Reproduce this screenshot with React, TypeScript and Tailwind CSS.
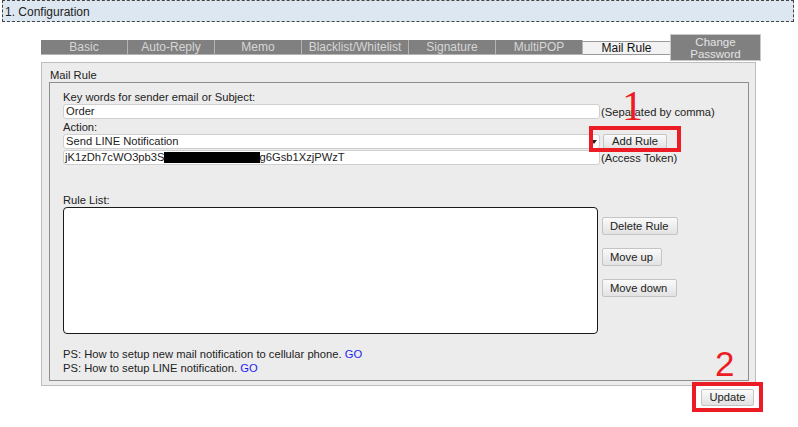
import React from 'react';

const tabs = [
  { label: 'Basic', w: 'w-[87px]' },
  { label: 'Auto-Reply', w: 'w-[87px]' },
  { label: 'Memo', w: 'w-[87px]' },
  { label: 'Blacklist/Whitelist', w: 'w-[107px]' },
  { label: 'Signature', w: 'w-[87px]' },
  { label: 'MultiPOP', w: 'w-[87px]' },
];

const btn =
  'h-[18px] px-[7px] border border-[#c4c4c4] rounded-[2px] bg-gradient-to-b from-[#fafafa] to-[#e2e2e2] text-[#222] leading-[16px] text-left';

export default function App() {
  return (
    <div className="relative w-[798px] h-[427px] bg-white font-['Liberation_Sans',Arial,sans-serif] text-[11.2px] leading-[14px] text-[#222]">
      {/* Section header */}
      <div className="ml-[2px] w-[792px] h-[22px] border border-dashed border-[#444] bg-[#dde7f2] pl-[2px] pt-[1px] flex items-center text-[12px]">
        1. Configuration
      </div>

      {/* Tabs */}
      <div className="ml-[41px] mt-[12px] h-[27px] flex items-center">
        {tabs.map((t) => (
          <div
            key={t.label}
            className={`${t.w} h-[15px] bg-[#808080] text-[#d6d6d6] border-r border-b border-[#b4b4b4] flex items-center justify-center text-[12px]`}
          >
            {t.label}
          </div>
        ))}
        <div className="w-[87px] h-[14px] bg-[#f2f2f2] border-t border-b border-[#9a9a9a] flex items-center justify-center text-[12px] text-[#111]">
          Mail Rule
        </div>
        <div className="w-[91px] h-[27px] bg-[#808080] border border-[#c8c8c8] text-[#e4e4e4] flex flex-col items-center justify-center text-[11.5px] leading-[12px]">
          <span>Change</span>
          <span>Password</span>
        </div>
      </div>

      {/* Panel */}
      <div className="ml-[41px] mt-[1px] w-[715px] h-[324px] border border-[#bdbdbd] bg-[#ececec] px-[7px] pt-[5px]">
        <div className="pl-[1px]">Mail Rule</div>
        <div className="w-[700px] h-[299px] border border-[#8e8e8e] pl-[13px] pt-[7px]">
          <div>Key words for sender email or Subject:</div>
          <div className="flex items-center h-[15px]">
            <div className="w-[537px] h-[15px] bg-white border border-[#cfcfcf] rounded-[3px] pl-[2px] leading-[13px]">
              Order
            </div>
            <span className="ml-[1px]">(Separated by comma)</span>
          </div>
          <div className="mt-[1px]">Action:</div>
          <div className="flex items-center h-[15px]">
            <div className="w-[537px] h-[15px] bg-white border border-[#cfcfcf] rounded-[3px] pl-[2px] leading-[13px] flex items-center justify-between pr-[2px]">
              <span>Send LINE Notification</span>
              <svg width="6" height="4" viewBox="0 0 6 4">
                <path d="M0 0 L6 0 L3 4 Z" fill="#222" />
              </svg>
            </div>
            <button className="ml-[3px] w-[64px] h-[15px] border border-[#c4c4c4] rounded-[2px] bg-gradient-to-b from-[#fafafa] to-[#e2e2e2] leading-[13px] text-center">
              Add Rule
            </button>
          </div>
          <div className="flex items-center h-[15px] mt-[1px]">
            <div className="w-[537px] h-[15px] bg-white border border-[#cfcfcf] rounded-[3px] pl-[1px] leading-[13px] flex items-center whitespace-nowrap">
              <span>jK1zDh7cWO3pb3S</span>
              <span className="inline-block w-[96px] h-[11px] bg-black -ml-[1px]" />
              <span>g6Gsb1XzjPWzT</span>
            </div>
            <span className="ml-[1px]">(Access Token)</span>
          </div>

          <div className="mt-[28px]">Rule List:</div>
          <div className="flex">
            <div className="w-[535px] h-[127px] bg-white border border-[#1a1a1a] rounded-[4px]" />
            <div className="ml-[4px] pt-[10px] flex flex-col items-start gap-[13px]">
              <button className={`${btn} w-[76px]`}>Delete Rule</button>
              <button className={`${btn} w-[60px]`}>Move up</button>
              <button className={`${btn} w-[75px]`}>Move down</button>
            </div>
          </div>

          <div className="mt-[13px]">
            PS: How to setup new mail notification to cellular phone.{' '}
            <span className="text-[#1c1cf0]">GO</span>
          </div>
          <div>
            PS: How to setup LINE notification. <span className="text-[#1c1cf0]">GO</span>
          </div>
        </div>
      </div>

      <div className="ml-[41px] w-[715px] mt-[3px] flex justify-end">
        <button className="mr-[2px] w-[53px] h-[17px] border border-[#c4c4c4] rounded-[2px] bg-gradient-to-b from-[#fafafa] to-[#e2e2e2] leading-[15px] text-center">
          Update
        </button>
      </div>

      {/* Annotations */}
      <div className="absolute left-[589px] top-[126px] w-[92px] h-[26px] border-4 border-[#ed1c24]" />
      <div className="absolute left-[622px] top-[85px] text-[42px] leading-none text-[#ed1c24] font-['Liberation_Serif',serif]">
        1
      </div>
      <div className="absolute left-[692px] top-[382px] w-[71px] h-[30px] border-4 border-[#ed1c24]" />
      <div className="absolute left-[715px] top-[346px] text-[35px] leading-none text-[#ed1c24]">
        2
      </div>
    </div>
  );
}
